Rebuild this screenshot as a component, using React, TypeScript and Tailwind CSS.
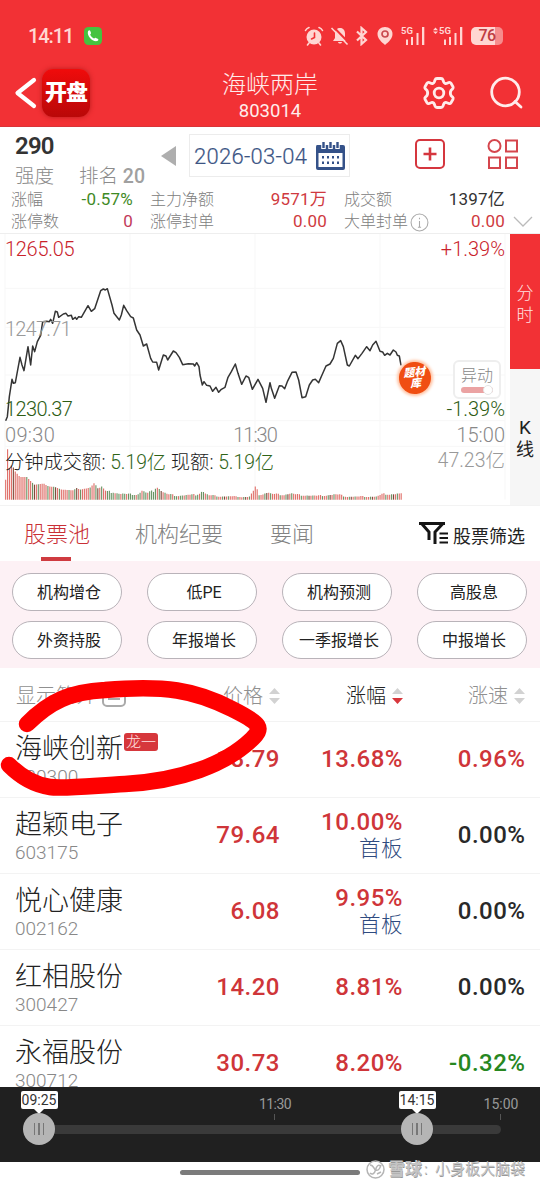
import React from "react";
import { clsx } from "clsx";

const stats = [
  [
    { label: "涨幅", value: "-0.57%", color: "text-[#3f8a26]" },
    { label: "涨停数", value: "0", color: "text-[#c23a5a]" },
  ],
  [
    { label: "主力净额", value: "9571万", color: "text-[#cf3a40]" },
    { label: "涨停封单", value: "0.00", color: "text-[#cf3a40]" },
  ],
  [
    { label: "成交额", value: "1397亿", color: "text-[#333]" },
    { label: "大单封单", value: "0.00", color: "text-[#cf3a40]", info: true },
  ],
];

const filters = ["机构增仓", "低PE", "机构预测", "高股息", "外资持股", "年报增长", "一季报增长", "中报增长"];

const stocks = [
  { name: "海峡创新", code: "300300", price: "18.79", change: "13.68%", speed: "0.96%", badge: "龙一" },
  { name: "超颖电子", code: "603175", price: "79.64", change: "10.00%", speed: "0.00%", note: "首板" },
  { name: "悦心健康", code: "002162", price: "6.08", change: "9.95%", speed: "0.00%", note: "首板" },
  { name: "红相股份", code: "300427", price: "14.20", change: "8.81%", speed: "0.00%" },
  { name: "永福股份", code: "300712", price: "30.73", change: "8.20%", speed: "-0.32%" },
];

// Intraday price line, three units per pixel
const pricePoints =
  "17,572 22,560 28,500 36,448 40,460 46,458 60,382 66,405 72,422 84,350 92,405 98,348 104,365 112,335 122,316 128,275 140,274 148,275 152,268 158,280 166,244 172,246 176,262 190,252 198,250 204,258 214,256 218,268 226,262 230,268 236,260 244,262 264,227 274,244 284,236 302,182 310,177 316,180 322,176 336,225 342,250 358,270 364,255 371,226 380,242 392,260 400,264 410,300 420,315 430,348 440,342 452,385 458,396 470,397 476,420 490,375 498,378 503,390 520,363 528,368 538,382 548,404 565,401 580,402 584,408 590,398 597,410 600,435 607,465 612,455 620,466 630,468 638,484 648,472 656,487 664,478 675,472 684,442 694,425 706,402 714,430 725,463 738,438 746,442 757,478 774,448 788,475 798,517 810,458 814,475 824,505 838,467 846,468 854,476 862,455 876,427 888,426 896,450 906,503 917,500 928,465 938,450 946,448 956,458 966,435 978,408 990,402 1000,385 1012,340 1022,332 1030,350 1042,405 1048,408 1066,376 1074,386 1086,370 1100,350 1110,362 1118,345 1128,334 1140,364 1148,366 1154,376 1162,370 1170,375 1180,360 1188,366 1192,376 1198,378 1203,406";

const volumeShape = [
  [17, 60], [22, 160], [28, 92], [36, 105], [46, 84], [60, 68], [80, 68], [103, 45], [132, 48], [145, 40], [165, 38],
  [185, 30], [222, 28], [228, 36], [240, 30], [270, 36], [283, 50], [295, 32], [305, 40], [320, 24], [340, 26],
  [355, 20], [385, 17], [415, 18], [426, 30], [440, 20], [460, 28], [470, 48], [482, 30], [500, 18], [530, 13],
  [590, 16], [607, 28], [625, 14], [660, 11], [748, 9], [768, 40], [776, 16], [805, 24], [815, 18], [850, 16],
  [872, 20], [890, 16], [950, 12], [1010, 17], [1040, 10], [1070, 10], [1130, 10], [1150, 18], [1185, 18], [1210, 20],
];

const volumeBars = Array.from({ length: 207 }, (_, i) => {
  const x = 17 + i * 5.76;
  const next = Math.max(1, volumeShape.findIndex((p) => p[0] >= x));
  const [x0, h0] = volumeShape[next - 1];
  const [x1, h1] = volumeShape[next];
  const height = h0 + ((h1 - h0) * (x - x0)) / (x1 - x0);
  const seed = (i * 37) % 11;
  const green = x > 318 && x < 470 ? seed < 8 : x > 500 && x < 640 ? seed < 6 : x > 60 && seed < 3;
  return { x, height: height * (x > 300 ? 0.8 + (seed % 4) * 0.09 : 1), color: green ? "#6a9464" : seed === 5 ? "#7d4a3a" : "#e0706a" };
});

function SortArrows({ active = false }: { active?: boolean }) {
  return (
    <svg width="11" height="16" viewBox="0 0 11 16">
      <path d="M5.500 0 11 6H0z" fill="#d2d2d2" />
      <path d="M5.500 16 11 10H0z" fill={active ? "#d8363c" : "#d2d2d2"} />
    </svg>
  );
}

function Signal({ updown = false }: { updown?: boolean }) {
  return (
    <svg width={updown ? 31 : 25} height="20" viewBox={updown ? "-6 0 31 20" : "0 0 25 20"} fill="#ffd6d2">
      {updown && <path d="M-3.5 1.5-1 4.2h-5zM-3.5 8-1 5.5h-5z" />}
      <text x="0" y="8" fontSize="9.5" fontWeight="700" fontFamily="Roboto">5G</text>
      <path d="M5 13.500h2V19H5zM10 11h2v8h-2zM15.500 7h2v12h-2zM21 1h2.300v18H21z" />
    </svg>
  );
}

function StatusBar() {
  return (
    <div className="flex h-[59px] items-start pt-[25px] pl-7 text-[#ffd6d2]">
      <span className="w-[55px] text-[20px] leading-[22px] font-medium tracking-[-1.1px]">14:11</span>
      <svg width="20" height="20" viewBox="0 0 20 20" className="mt-px">
        <rect x="1" y="1" width="18" height="18" rx="4.500" fill="#45c33f" />
        <path d="M5 5.200c1-1.400 2-1 2.500.2l.5 1.500c.1.800-.8 1-.8 1.700.5 1.700 1.900 3.100 3.800 4 .8.100 1-.900 1.900-.700l1.800.8c1.100.7.8 1.700-.4 2.300C9.600 16.200 3.500 9.800 5 5.200z" fill="#fff" />
      </svg>
      <div className="mr-[37px] ml-auto flex items-center pt-px">
        <svg width="20" height="20" viewBox="0 0 20 20" fill="none" stroke="#ffd6d2" strokeWidth="1.600" strokeLinecap="round">
          <circle cx="10" cy="11" r="7.500" fill="#ffd6d2" stroke="none" />
          <path d="M1.500 4.500Q2.500 2.500 5 1.500M18.500 4.500Q17.500 2.500 15 1.500M5 17l-1.500 2M15 17l1.500 2" />
          <path d="M10.500 7v4.500L7.500 13" stroke="#f23135" />
        </svg>
        <svg className="ml-1.5" width="20" height="20" viewBox="0 0 20 20">
          <path d="M10 2c3.500 0 5 2.500 5 5.500V12l2 3H3l2-3V7.500C5 4.500 6.500 2 10 2zM8 16h4c-.5 2-3.500 2-4 0z" fill="#ffd6d2" />
          <path d="M4 1.500 20 18" stroke="#f23135" strokeWidth="2" />
          <path d="M1.500 2 17.500 18.500" stroke="#ffd6d2" strokeWidth="1.600" />
        </svg>
        <svg className="ml-1" width="16" height="20" viewBox="0 0 16 20" fill="none" stroke="#ffd6d2" strokeWidth="2.200">
          <path d="m3 5.500 9 8.500-4.500 4V2L12 6l-9 8.500" />
        </svg>
        <svg className="ml-1.5" width="18" height="20" viewBox="0 0 18 20">
          <path d="M9 1c4.500 0 7.500 3.200 7.500 7 0 4.500-4 8-7.500 11-3.500-3-7.500-6.500-7.500-11 0-3.800 3-7 7.500-7z" fill="#ffd6d2" />
          <circle cx="9" cy="8" r="3" fill="none" stroke="#c94a50" strokeWidth="1.700" />
        </svg>
        <span className="ml-[7px] flex"><Signal /></span>
        <span className="ml-[7px] flex"><Signal updown /></span>
        <div className="ml-[7px] flex h-[18px] w-[32px] items-center justify-center rounded-[5px] bg-[linear-gradient(90deg,#ffd6d2_76%,#f68c8c_76%)] text-[16px] font-medium tracking-[-0.5px] text-[#bf3c42]">76</div>
      </div>
    </div>
  );
}

function Header() {
  return (
    <header className="grid h-[68px] grid-cols-[200px_140px_200px] border-b border-[#d93439]">
      <div className="flex items-center pl-3.5">
        <svg width="24" height="34" viewBox="0 0 24 34" fill="none" stroke="#fff" strokeWidth="4.200" strokeLinecap="round" strokeLinejoin="round">
          <path d="M20 4 3.500 17 20 30" />
        </svg>
        <div className="ml-1 flex h-12 w-12 items-center justify-center rounded-[11px] bg-linear-to-b from-[#f00b0b] to-[#b90808] pb-px text-[22px] font-black tracking-[-1px] text-white shadow-[0_0_5px_#b91c1c]">
          开盘
        </div>
      </div>
      <div className="flex flex-col items-center pt-[11px] text-[#ffeceb]">
        <div className="text-[24px] leading-[30px] font-light">海峡两岸</div>
        <div className="text-[18.500px] leading-[22px]">803014</div>
      </div>
      <div className="flex items-center pl-[82px]">
        <svg width="34" height="34" viewBox="0 0 34 34" fill="none" stroke="#ffeceb" strokeWidth="2.800" strokeLinejoin="round">
          <path d="M13 4q.5-1.500 2-1.500h4q1.500 0 2 1.500l.7 2q.4 1 1.400 1.400t2-.1l1.700-.8q1.400-.5 2.200.8l2 3.400q.6 1.300-.4 2.200l-1.500 1.300q-1.600 2.800 0 5.600l1.500 1.300q1 1 .4 2.200l-2 3.400q-.8 1.300-2.200.8l-1.700-.8q-1-.5-2-.1t-1.400 1.400l-.7 2q-.5 1.500-2 1.500h-4q-1.500 0-2-1.500l-.7-2q-.4-1-1.400-1.400t-2 .1l-1.700.8q-1.400.5-2.200-.8l-2-3.400q-.6-1.300.4-2.200l1.500-1.300q1.600-2.800 0-5.600l-1.500-1.300q-1-1-.4-2.200l2-3.400q.8-1.300 2.200-.8l1.700.8q1 .5 2 .1T12.300 6z" />
          <circle cx="17" cy="17" r="4.800" />
        </svg>
        <svg className="ml-[33px]" width="34" height="34" viewBox="0 0 34 34" fill="none" stroke="#ffeceb" strokeWidth="2.800" strokeLinecap="round">
          <circle cx="16.500" cy="16" r="13.800" />
          <path d="m26 25.500 6 5.500" />
        </svg>
      </div>
    </header>
  );
}

function Summary() {
  return (
    <section className="h-[107px] border-b border-[#eee]">
      <div className="flex h-[61px]">
        <div className="w-[145px] shrink-0 pt-[7px] pl-[15px]">
          <div className="text-[24px] leading-6 font-semibold tracking-[-0.8px] text-[#333]">290</div>
          <div className="mt-[7px] flex justify-between text-[19.500px] leading-6 font-light whitespace-nowrap text-[#8c8c8c]">
            <span>强度</span>
            <span>排名 <b className="font-medium text-[#a0a0a0]">20</b></span>
          </div>
        </div>
        <svg className="mt-[19px] ml-4" width="15" height="20" viewBox="0 0 15 20"><path d="M15 0v20L0 10z" fill="#aeaeae" /></svg>
        <div className="mt-[7px] ml-[13px] flex h-[43px] w-[161px] items-center border border-[#ececec] pt-px pl-1 text-[22px] tracking-[0.3px] text-[#3c5584]">
          <span className="w-[121px] font-light whitespace-nowrap [-webkit-text-stroke:0.2px]">2026-03-04</span>
          <svg width="31" height="28" viewBox="0 0 31 28">
            <path d="M2 3h26q2 0 2 2v21q0 2-2 2H3q-2 0-2-2V5q0-2 1-2z" fill="#355289" />
            <path d="M3.500 11h24v14h-24z" fill="#fff" />
            <path d="M7 14h2v2.500H7zM12 14h2v2.500h-2zM17 14h2v2.500h-2zM22 14h2v2.500h-2zM7 19.500h2V22H7zM12 19.500h2V22h-2zM17 19.500h2V22h-2zM22 19.500h2V22h-2z" fill="#355289" />
            <path d="M8.500 0v7M15.500 0v7M22.500 0v7" stroke="#fff" strokeWidth="4.500" />
            <path d="M8.500 0v6M15.500 0v6M22.500 0v6" stroke="#355289" strokeWidth="2.400" />
          </svg>
        </div>
        <svg className="mt-[11px] ml-[64px]" width="32" height="32" viewBox="0 0 32 32" fill="none" stroke="#d5363e" strokeWidth="2">
          <rect x="2" y="2" width="28" height="28" rx="4" />
          <path d="M9.500 16h13M16 9.500v13" strokeWidth="2.600" />
        </svg>
        <svg className="mt-[11px] ml-[41px]" width="32" height="32" viewBox="0 0 32 32" fill="none" stroke="#d5464d" strokeWidth="2">
          <circle cx="7.500" cy="8" r="6" />
          <path d="M19 2.500h11v11H19zM2 19.500h11v10.500H2zM19 19.500h11v10.500H19z" />
        </svg>
      </div>
      <div className="flex pt-px text-[16px] leading-[22px]">
        <div className="grid w-[505px] grid-cols-[122px_177px_161px] gap-x-[17px] pl-[11px]">
          {stats.map((group, idx) => (
            <div key={idx}>
              {group.map((item) => (
                <div key={item.label} className="flex h-[22px] justify-between whitespace-nowrap">
                  <span className="flex items-center font-light text-[#808080]">
                    {item.label}
                    {item.info && (
                      <svg className="ml-0.5" width="19" height="19" viewBox="0 0 18 18" fill="none" stroke="#aaa">
                        <circle cx="9" cy="9" r="8" />
                        <path d="M9 4.500v1.500M9 7.500v6M7.500 13.500h3" />
                      </svg>
                    )}
                  </span>
                  <span className={clsx("-mt-px text-[17px] tracking-[0.2px]", item.color)}>{item.value}</span>
                </div>
              ))}
            </div>
          ))}
        </div>
        <svg className="mt-[26px] ml-2" width="20" height="13" viewBox="0 0 20 13" fill="none" stroke="#bbb" strokeWidth="1.300"><path d="m1 2 9 9 9-9" /></svg>
      </div>
    </section>
  );
}

function ChartPanel() {
  return (
    <section className="flex h-[271px]">
      <div className="relative w-[510px] text-[20px] leading-6 font-light">
        <div className="absolute top-[83px] left-[5px] tracking-[-0.8px] text-[#999]">1247.71</div>
        <svg width="510" height="271" viewBox="0 12 1530 813" fill="none">
          <path d="M15 12V809M390 12V809M765 12V809M1140 12V809M1515 12V809M15 175H1515M15 292H1515M15 435H1515M15 572H1515M15 649H1515" stroke="#f7f7f7" strokeWidth="3" />
          {volumeBars.map((bar, i) => (
            <path key={i} d={`M${bar.x} 809v-${bar.height}`} stroke={bar.color} strokeWidth="3.400" />
          ))}
          <polyline points={pricePoints} stroke="#353535" strokeWidth="4.500" strokeLinejoin="round" />
        </svg>
        <div className="absolute top-[3px] left-[5px] tracking-[-0.3px] text-[#c9222b]">1265.05</div>
        <div className="absolute top-[3px] right-[5px] text-[#c9222b]">+1.39%</div>
        <div className="absolute top-[163px] left-[5px] tracking-[-0.6px] text-[#2d5c13]">1230.37</div>
        <div className="absolute top-[163px] right-[5px] text-[#2d5c13]">-1.39%</div>
        <div className="absolute top-[189px] left-[5px] tracking-[0.3px] text-[#888]">09:30</div>
        <div className="absolute top-[189px] left-[255px] -translate-x-1/2 tracking-[-1px] text-[#888]">11:30</div>
        <div className="absolute top-[189px] right-[5px] text-[#888]">15:00</div>
        <div className="absolute top-[217px] left-[5px] text-[19.300px] whitespace-nowrap text-[#222]">
          分钟成交额: <span className="text-[#2f6418]">5.19亿</span> 现额: <span className="text-[#2f6418]">5.19亿</span>
        </div>
        <div className="absolute top-[215px] right-[5px] text-[19.500px] text-[#999]">47.23亿</div>
        <div className="absolute top-[128px] left-[399px] flex h-8 w-8 -rotate-6 flex-col items-center justify-center rounded-full bg-[#f04e12] text-[11px] leading-[11px] font-black text-white italic shadow-[0_0_3px_2px_#ffc2a2]">
          <span>题材</span>
          <span>库</span>
        </div>
        <div className="absolute top-[126px] left-[453px] h-[39px] w-12 rounded-md border-2 border-[#eee] bg-white pt-0.5 text-center text-[16px] leading-6 text-[#888]">
          异动
          <div className="mx-auto -mt-px flex h-1.5 w-8 items-center justify-end rounded-full bg-[#eba3a3]">
            <span className="h-2.5 w-2.5 rounded-full border border-[#e5e5e5] bg-white" />
          </div>
        </div>
      </div>
      <div className="w-[30px] text-center text-[17px] leading-[22px]">
        <div className="flex h-[135px] flex-col items-center justify-center bg-[#f23135] pt-1 font-light text-[#ffe2e2]">
          <span>分</span>
          <span>时</span>
        </div>
        <div className="flex h-[136px] flex-col items-center justify-center bg-[#f6f6f6] pt-1 text-[#222]">
          <span className="text-[19px]">K</span>
          <span className="text-[18px]">线</span>
        </div>
      </div>
    </section>
  );
}

function Tabs() {
  return (
    <nav className="flex h-14 border-t border-[#f3f3f3] pl-6 text-[22px] leading-[57px] font-light text-[#828282]">
      <div className="relative w-[66px] text-[#c92f36]">
        股票池
        <span className="absolute bottom-0 left-[17px] h-1 w-[30px] bg-[#cf3b40]" />
      </div>
      <div className="ml-[45px]">机构纪要</div>
      <div className="ml-[47px]">要闻</div>
      <div className="mr-[15px] ml-auto flex items-center pt-[5px] text-[18px] font-normal text-[#222]">
        <svg className="mr-[5px] -mt-1.5" width="29" height="24" viewBox="0 0 29 24" fill="none" stroke="#151515" strokeWidth="3">
          <path d="M0 2.500h26M3 3l7 8v8M23.500 3l-7.500 8v12" />
          <path d="M20.500 12.500H29M20.500 17H29M20.500 21.500H29" strokeWidth="2" />
        </svg>
        股票筛选
      </div>
    </nav>
  );
}

function StockTable() {
  return (
    <section className="h-[419px] overflow-hidden">
      <div className="grid h-[54px] grid-cols-[140px_140px_123px_122px] items-center border-b border-[#f3f3f3] pt-[3px] text-[20px] font-light text-[#909090]">
        <div className="flex items-center pl-4 whitespace-nowrap">
          显示简介
          <svg className="ml-1.5 shrink-0" width="24" height="22" viewBox="0 0 24 22" fill="none" stroke="#aaa" strokeWidth="2">
            <rect x="1" y="1" width="22" height="20" rx="4" />
            <path d="M6 8h12M6 14h12" />
          </svg>
        </div>
        <div className="flex items-center justify-end gap-1.5">价格<SortArrows /></div>
        <div className="flex items-center justify-end gap-1.5 text-[#222]">涨幅<SortArrows active /></div>
        <div className="flex items-center justify-end gap-1.5">涨速<SortArrows /></div>
      </div>
      {stocks.map((stock) => (
        <div key={stock.code} className="grid h-[76px] grid-cols-[170px_110px_123px_122.500px] border-b border-[#f3f3f3] text-right text-[24px] leading-[74px] font-medium tracking-[0.5px] text-[#cf3539]">
          <div className="pt-2.5 pl-[15px] text-left font-light tracking-normal">
            <div className="flex items-start text-[27px] leading-[34px] whitespace-nowrap text-[#222]">
              {stock.name}
              {stock.badge && (
                <span className="mt-px ml-px rounded-[3px] bg-[#d6373c] px-0.5 text-[15px] leading-[18px] text-[#ffe3e3]">{stock.badge}</span>
              )}
            </div>
            <div className="text-[19px] leading-[22px] text-[#888]">{stock.code}</div>
          </div>
          <div>{stock.price}</div>
          {stock.note ? (
            <div className="flex flex-col pt-[9px] leading-[30px]">
              {stock.change}
              <span className="text-[21.500px] leading-6 font-light text-[#2f4b80]">{stock.note}</span>
            </div>
          ) : (
            <div>{stock.change}</div>
          )}
          <div className={clsx(stock.speed === "0.00%" && "text-[#292929]", stock.speed.startsWith("-") && "text-[#27871f]")}>{stock.speed}</div>
        </div>
      ))}
    </section>
  );
}

// Handle with its time bubble, centred on the parent's left edge
function Handle({ time }: { time: string }) {
  return (
    <div className="flex w-9 -translate-x-1/2 flex-col items-center">
      <div className="h-[18px] w-[37px] rounded-[2px] bg-white text-center text-[14px] leading-[18px] text-[#333]">{time}</div>
      <svg width="10" height="5" viewBox="0 0 10 5"><path d="M0 0h10L5 5z" fill="#fff" /></svg>
      <div className="-mt-px flex h-8 w-8 items-center justify-center gap-[3px] rounded-full bg-[#b5b5b5]">
        <i className="h-3 w-[1.500px] bg-[#777]" />
        <i className="h-3 w-[1.500px] bg-[#777]" />
        <i className="h-3 w-[1.500px] bg-[#777]" />
      </div>
    </div>
  );
}

function TimeSlider() {
  return (
    <div className="relative h-[75px] bg-[#202020] pt-[38px] text-[14px] text-[#999]">
      <div className="ml-[39px] h-[9px] w-[462px] rounded-full bg-[#3a3a3a]" />
      <div className="absolute top-[7px] left-[275px] -translate-x-1/2 tracking-[-0.6px]">11:30</div>
      <div className="absolute top-[27px] left-[274px] h-1.5 w-px bg-[#555]" />
      <div className="absolute top-[7px] left-[501px] -translate-x-1/2">15:00</div>
      <div className="absolute top-[27px] left-[500px] h-1.5 w-px bg-[#555]" />
      <div className="absolute top-1 left-[39px]"><Handle time="09:25" /></div>
      <div className="absolute top-1 left-[417px]"><Handle time="14:15" /></div>
    </div>
  );
}

export default function App() {
  return (
    <div className="relative h-[1186px] w-[540px] overflow-hidden bg-white font-[Roboto,'Noto_Sans_CJK_SC',sans-serif]">
      <div className="bg-[#f23135]">
        <StatusBar />
        <Header />
      </div>
      <Summary />
      <ChartPanel />
      <Tabs />
      <div className="grid h-[107px] grid-cols-[repeat(4,110px)] content-start gap-x-[25px] gap-y-2.5 bg-[#fdf1f5] pt-3 pl-3">
        {filters.map((filter) => (
          <div key={filter} className="flex h-[38px] items-center justify-center rounded-full border border-[#b9b3b9] bg-white pt-0.5 pl-1 text-[16px] text-[#222]">
            {filter}
          </div>
        ))}
      </div>
      <StockTable />
      <TimeSlider />
      <div className="relative flex h-6 items-start pl-[180px]">
        <div className="mt-2 h-[5px] w-[180px] rounded-full bg-[#7b7b7b]" />
        <div className="absolute -top-[3px] left-[366px] flex items-center text-[15px] leading-5 whitespace-nowrap text-[#c4c4c4] [text-shadow:0.5px_0.5px_0.5px_#999]">
          <svg className="mr-[3px]" width="19" height="19" viewBox="0 0 19 19" fill="none" stroke="#b5b5b5" strokeWidth="1.500">
            <circle cx="9.500" cy="9.500" r="8.500" />
            <path d="M4 5c4 0 3.500 4 5.500 5s4 0 5.500-5M4 13c2 2 4.500 1 5.500-3s3-6 5-4M11 14l4-2" />
          </svg>
          <b className="w-[36px] text-[17px] font-bold">雪球</b>
          <span className="w-[11px]">:</span>
          <span>小身板大脑袋</span>
        </div>
      </div>

      {/* Hand-drawn marker around the first stock */}
      <svg className="pointer-events-none absolute top-[670px] left-0" width="280" height="135" viewBox="0 670 280 135" fill="none" stroke="#fe0000" strokeWidth="16.500" strokeLinecap="round" strokeLinejoin="round">
        <path d="M27 724C50 701 70 692 105 690C165 685 195 690 232 709C262 724 263 728 252 739C225 765 180 781 125 784C90 786 62 789 50 787C35 785 20 776 9 765" />
      </svg>
    </div>
  );
}
